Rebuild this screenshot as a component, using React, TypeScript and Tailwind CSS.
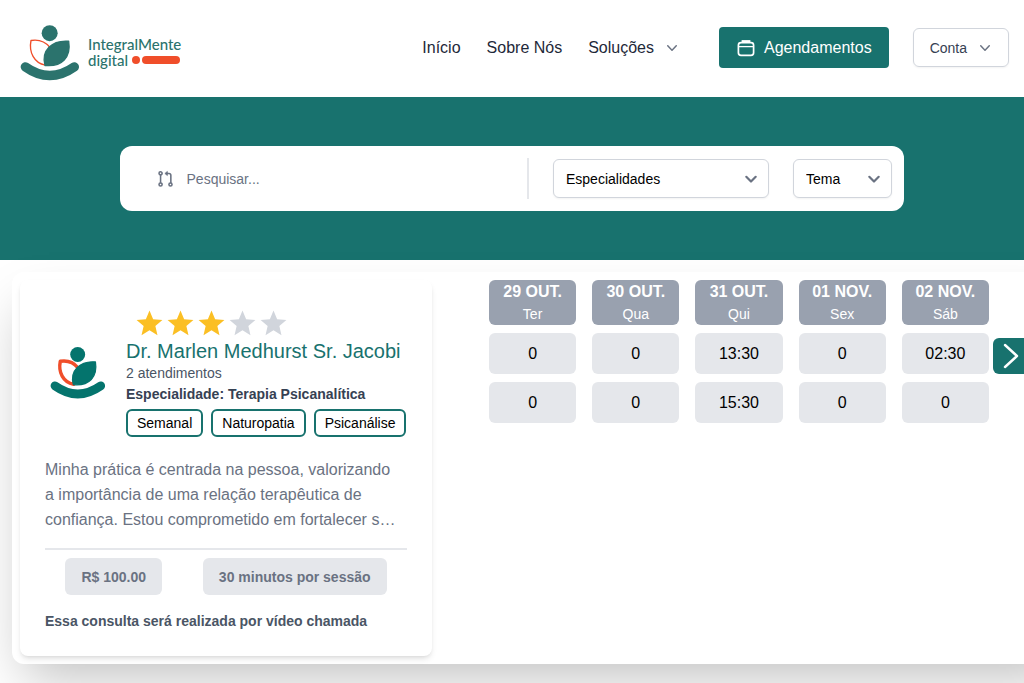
import React from 'react';

type LogoProps = {
  className?: string;
  leafWidth: number;
};

const LogoMark: React.FC<LogoProps> = ({ className, leafWidth }) => (
  <svg viewBox="62 42 180 170" className={className} fill="none" aria-hidden="true">
    <path
      d="M95 91 C120 87 140 97 152 112 L138 165 C104 158 88 126 95 91Z"
      stroke="#f04e2a"
      strokeWidth={leafWidth}
      strokeLinejoin="round"
    />
    <path
      d="M137 166 C125 122 157 89 208 93 C216 141 188 171 137 166Z"
      fill="currentColor"
      stroke="currentColor"
      strokeWidth="4"
      strokeLinejoin="round"
    />
    <circle cx="151" cy="69" r="24" fill="currentColor" />
    <path d="M78 170 Q151 222 225 170" stroke="currentColor" strokeWidth="28" strokeLinecap="round" />
  </svg>
);

const ChevronDown: React.FC<{ className?: string }> = ({ className }) => (
  <svg viewBox="0 0 20 20" fill="currentColor" className={className} aria-hidden="true">
    <path
      fillRule="evenodd"
      clipRule="evenodd"
      d="M5.23 7.21a.75.75 0 011.06.02L10 11.17l3.71-3.94a.75.75 0 111.08 1.04l-4.25 4.5a.75.75 0 01-1.08 0l-4.25-4.5a.75.75 0 01.02-1.06z"
    />
  </svg>
);

const SelectChevron: React.FC = () => (
  <svg
    viewBox="0 0 20 20"
    fill="none"
    stroke="currentColor"
    strokeWidth="2.2"
    strokeLinecap="round"
    strokeLinejoin="round"
    className="pointer-events-none absolute top-1/2 right-2 size-5 -translate-y-1/2 text-gray-500"
    aria-hidden="true"
  >
    <path d="M5.3 7.8l4.7 4.7 4.7-4.7" />
  </svg>
);

const Star: React.FC<{ filled: boolean }> = ({ filled }) => (
  <svg viewBox="0 0 24 24" fill="currentColor" className={`size-[31px] ${filled ? 'text-[#fbbf24]' : 'text-gray-300'}`} aria-hidden="true">
    <path d="M12 17.27L18.18 21l-1.64-7.03L22 9.24l-7.19-.61L12 2 9.19 8.63 2 9.24l5.46 4.73L5.82 21z" />
  </svg>
);

const days = [
  { date: '29 OUT.', weekday: 'Ter' },
  { date: '30 OUT.', weekday: 'Qua' },
  { date: '31 OUT.', weekday: 'Qui' },
  { date: '01 NOV.', weekday: 'Sex' },
  { date: '02 NOV.', weekday: 'Sáb' },
];

const slots = [
  ['0', '0', '13:30', '0', '02:30'],
  ['0', '0', '15:30', '0', '0'],
];

const tags = ['Semanal', 'Naturopatia', 'Psicanálise'];

const Header: React.FC = () => (
  <header className="flex h-[97px] items-center justify-between bg-white pr-[15px] pb-[2px] pl-5">
    <a href="#" className="flex items-center gap-2">
      <LogoMark className="mt-[10px] h-[57px] w-[60px] text-[#2b736d]" leafWidth={4} />
      <span className="mt-2 flex flex-col font-['Lato','Liberation_Sans',sans-serif] text-[15px] leading-4 font-medium text-[#2b736d]">
        <span>IntegralMente</span>
        <span className="flex items-center gap-[2px]">
          digital
          <span className="ml-[2px] size-2 rounded-full bg-[#f04e2a]" />
          <span className="h-2 w-[38px] rounded-full bg-[#f04e2a]" />
        </span>
      </span>
    </a>

    <div className="flex items-center">
      <nav className="mr-[37px] flex items-center gap-[26px] text-base text-gray-800">
        <a href="#">Início</a>
        <a href="#">Sobre Nós</a>
        <button type="button" className="flex items-center gap-2">
          Soluções
          <ChevronDown className="size-5 text-gray-500" />
        </button>
      </nav>
      <button type="button" className="mr-6 flex h-[41px] items-center gap-2 rounded bg-[#18726e] px-[17px] text-base text-white">
        <svg viewBox="0 0 20 20" fill="none" stroke="currentColor" strokeWidth="1.7" className="size-5" aria-hidden="true">
          <rect x="2.4" y="4.6" width="15.2" height="12.8" rx="2.6" />
          <path d="M2.4 8.6h15.2" strokeWidth="1.3" />
          <path d="M5.6 3.3h8.8" strokeWidth="2.4" />
        </svg>
        Agendamentos
      </button>
      <button type="button" className="flex h-[39px] items-center gap-2 rounded-md border border-gray-300 pr-[13px] pl-4 text-sm text-gray-700 shadow-xs">
        Conta
        <ChevronDown className="size-5 text-gray-500" />
      </button>
    </div>
  </header>
);

const SearchBar: React.FC = () => (
  <div className="bg-[#18726e] py-[49px]">
    <form className="mx-auto flex h-[65px] w-full max-w-[784px] items-center gap-6 rounded-xl bg-white px-3">
      <label className="flex flex-1 items-center gap-3 pl-[26px]">
        <svg viewBox="0 0 18 18" fill="none" stroke="currentColor" strokeWidth="1.7" className="size-[18px] text-gray-500" aria-hidden="true">
          <circle cx="2.8" cy="2.8" r="1.7" />
          <circle cx="2.8" cy="15" r="1.7" />
          <circle cx="13.6" cy="15" r="1.7" />
          <path d="M2.8 4.5v8.8" />
          <path d="M14 13.3V5a2 2 0 0 0-2-2H9" />
          <path d="M10.2 .8L7.5 3l2.7 2.2z" fill="currentColor" strokeWidth=".8" />
        </svg>
        <input
          type="text"
          aria-label="Pesquisar"
          placeholder="Pesquisar..."
          className="w-full min-w-0 text-sm text-gray-700 outline-none placeholder:text-gray-500"
        />
      </label>
      <div className="h-[41px] w-[2px] bg-gray-200" />
      <div className="relative">
        <select aria-label="Especialidades" className="h-[39px] w-[216px] appearance-none rounded-md border border-gray-300 bg-white pl-3 text-sm text-black shadow-xs">
          <option>Especialidades</option>
        </select>
        <SelectChevron />
      </div>
      <div className="relative">
        <select aria-label="Tema" className="h-[39px] w-[99px] appearance-none rounded-md border border-gray-300 bg-white pl-3 text-sm text-black shadow-xs">
          <option>Tema</option>
        </select>
        <SelectChevron />
      </div>
    </form>
  </div>
);

const ProfessionalCard: React.FC = () => (
  <article className="w-[412px] shrink-0 rounded-lg bg-white px-[25px] pt-7 pb-6 shadow-md">
    <div className="flex items-center gap-4">
      <div className="flex w-[65px] shrink-0 justify-center">
        <LogoMark className="h-[53px] w-14 text-[#04746d]" leafWidth={11} />
      </div>
      <div className="min-w-0">
        <div className="ml-2 flex" role="img" aria-label="3 de 5">
          {[1, 2, 3, 4, 5].map(n => (
            <Star key={n} filled={n <= 3} />
          ))}
        </div>
        <h2 className="text-xl leading-6 whitespace-nowrap text-[#18726e]">Dr. Marlen Medhurst Sr. Jacobi</h2>
        <p className="text-sm leading-[21px] text-gray-600">2 atendimentos</p>
        <p className="text-sm leading-[21px] font-bold text-gray-700">Especialidade: Terapia Psicanalítica</p>
        <ul className="mt-1 flex gap-2">
          {tags.map(tag => (
            <li key={tag} className="flex h-7 items-center rounded-md border-2 border-[#18726e] px-[9px] text-sm text-black">
              {tag}
            </li>
          ))}
        </ul>
      </div>
    </div>

    <p className="mt-5 pr-2 text-base leading-[25px] text-gray-500">
      Minha prática é centrada na pessoa, valorizando a importância de uma relação terapêutica de confiança. Estou comprometido em fortalecer s…
    </p>

    <div className="mt-4 flex justify-around border-t-2 border-gray-200 pt-2 text-sm font-bold text-gray-500">
      <span className="flex h-[37px] items-center rounded-md bg-gray-200 px-4">R$ 100.00</span>
      <span className="flex h-[37px] items-center rounded-md bg-gray-200 px-4">30 minutos por sessão</span>
    </div>
    <p className="mt-4 text-sm leading-[21px] font-bold text-gray-600">Essa consulta será realizada por vídeo chamada</p>
  </article>
);

const Schedule: React.FC = () => (
  <>
    <div className="-mt-2 ml-[41px] flex-1">
      <table className="w-full table-fixed border-separate border-spacing-x-4 border-spacing-y-2 text-center">
        <thead>
          <tr>
            {days.map(day => (
              <th key={day.date} scope="col" className="rounded-md bg-gray-400 p-0 text-white">
                <span className="block text-base leading-6 font-bold">{day.date}</span>
                <span className="block text-sm leading-[21px] font-normal">{day.weekday}</span>
              </th>
            ))}
          </tr>
        </thead>
        <tbody>
          {slots.map((row, i) => (
            <tr key={i}>
              {row.map((time, j) => (
                <td key={j} className="p-0">
                  <button type="button" className="block h-[41px] w-full rounded-md bg-gray-200 text-base text-black">
                    {time}
                  </button>
                </td>
              ))}
            </tr>
          ))}
        </tbody>
      </table>
    </div>
    <button type="button" aria-label="Próximos dias" className="mt-[58px] -ml-3 flex h-9 w-9 shrink-0 items-center justify-center rounded-md bg-[#18726e] text-white">
      <svg viewBox="0 0 16 28" fill="none" stroke="currentColor" strokeWidth="2.4" strokeLinecap="round" strokeLinejoin="round" className="h-7 w-4" aria-hidden="true">
        <path d="M2 3l12 11L2 25" />
      </svg>
    </button>
  </>
);

const App: React.FC = () => {
  return (
    <div className="min-h-screen overflow-hidden bg-white font-['Liberation_Sans',Arial,sans-serif]">
      <Header />
      <SearchBar />
      <main className="-mr-12 mt-3 mb-5 ml-3 flex items-start rounded-xl bg-white py-2 pr-[43px] pl-2 shadow-2xl">
        <ProfessionalCard />
        <Schedule />
      </main>
    </div>
  );
};

export default App;
